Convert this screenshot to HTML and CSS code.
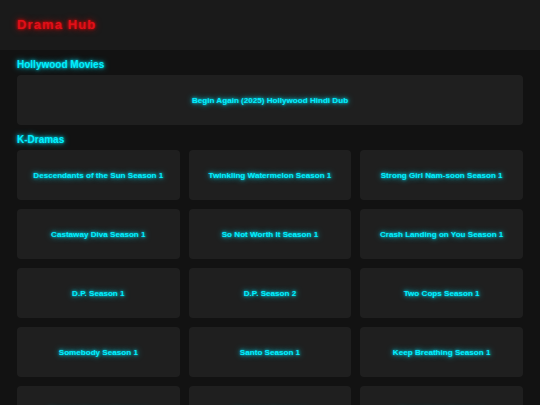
FILE: index.html
```html
<!DOCTYPE html>
<html lang="en">
<head>
<meta charset="utf-8">
<title>Drama Hub</title>
<link rel="stylesheet" href="styles.css">
</head>
<body>
<header class="site-header">
  <h1 class="logo">Drama Hub</h1>
</header>
<main class="content">
  <section class="section">
    <h2 class="section-title">Hollywood Movies</h2>
    <div class="grid grid-single">
      <a class="card" href="#">Begin Again (2025) Hollywood Hindi Dub</a>
    </div>
  </section>
  <section class="section">
    <h2 class="section-title">K-Dramas</h2>
    <div class="grid">
      <a class="card" href="#">Descendants of the Sun Season 1</a>
      <a class="card" href="#">Twinkling Watermelon Season 1</a>
      <a class="card" href="#">Strong Girl Nam-soon Season 1</a>
      <a class="card" href="#">Castaway Diva Season 1</a>
      <a class="card" href="#">So Not Worth It Season 1</a>
      <a class="card" href="#">Crash Landing on You Season 1</a>
      <a class="card" href="#">D.P. Season 1</a>
      <a class="card" href="#">D.P. Season 2</a>
      <a class="card" href="#">Two Cops Season 1</a>
      <a class="card" href="#">Somebody Season 1</a>
      <a class="card" href="#">Santo Season 1</a>
      <a class="card" href="#">Keep Breathing Season 1</a>
      <a class="card" href="#">Move to Heaven Season 1</a>
      <a class="card" href="#">Vincenzo Season 1</a>
      <a class="card" href="#">Sweet Home Season 1</a>
    </div>
  </section>
</main>
</body>
</html>
```
FILE: styles.css
```css
html, body {
  margin: 0;
  padding: 0;
  background: #121212;
  font-family: "Liberation Sans", Arial, sans-serif;
}

.site-header {
  background: #1a1a1a;
  height: 50px;
  display: flex;
  align-items: center;
  padding: 0 17px;
  box-sizing: border-box;
}

.logo {
  margin: 0;
  font-size: 13px;
  font-weight: bold;
  letter-spacing: 1.1px;
  color: #e0101a;
  text-shadow: 0 0 3px #ff0000, 0 0 7px rgba(255, 0, 0, 0.7);
  line-height: 16px;
}

.content {
  padding: 8px 17px;
}

.section + .section {
  margin-top: 8px;
}

.section-title {
  margin: 0 0 4px;
  padding-top: 1px;
  font-size: 10px;
  line-height: 12px;
  font-weight: bold;
  color: #00f0ff;
  text-shadow: 0 0 3px #00e5ff, 0 0 6px rgba(0, 229, 255, 0.8);
}

.grid {
  display: grid;
  grid-template-columns: repeat(3, 1fr);
  gap: 9px;
}

.grid-single {
  grid-template-columns: 1fr;
}

.card {
  height: 50px;
  background: #1f1f1f;
  border-radius: 4px;
  display: flex;
  align-items: center;
  justify-content: center;
  text-align: center;
  font-size: 8.1px;
  font-weight: bold;
  color: #00f0ff;
  text-decoration: none;
  text-shadow: 0 0 3px #00e5ff, 0 0 6px rgba(0, 229, 255, 0.8);
}
```
